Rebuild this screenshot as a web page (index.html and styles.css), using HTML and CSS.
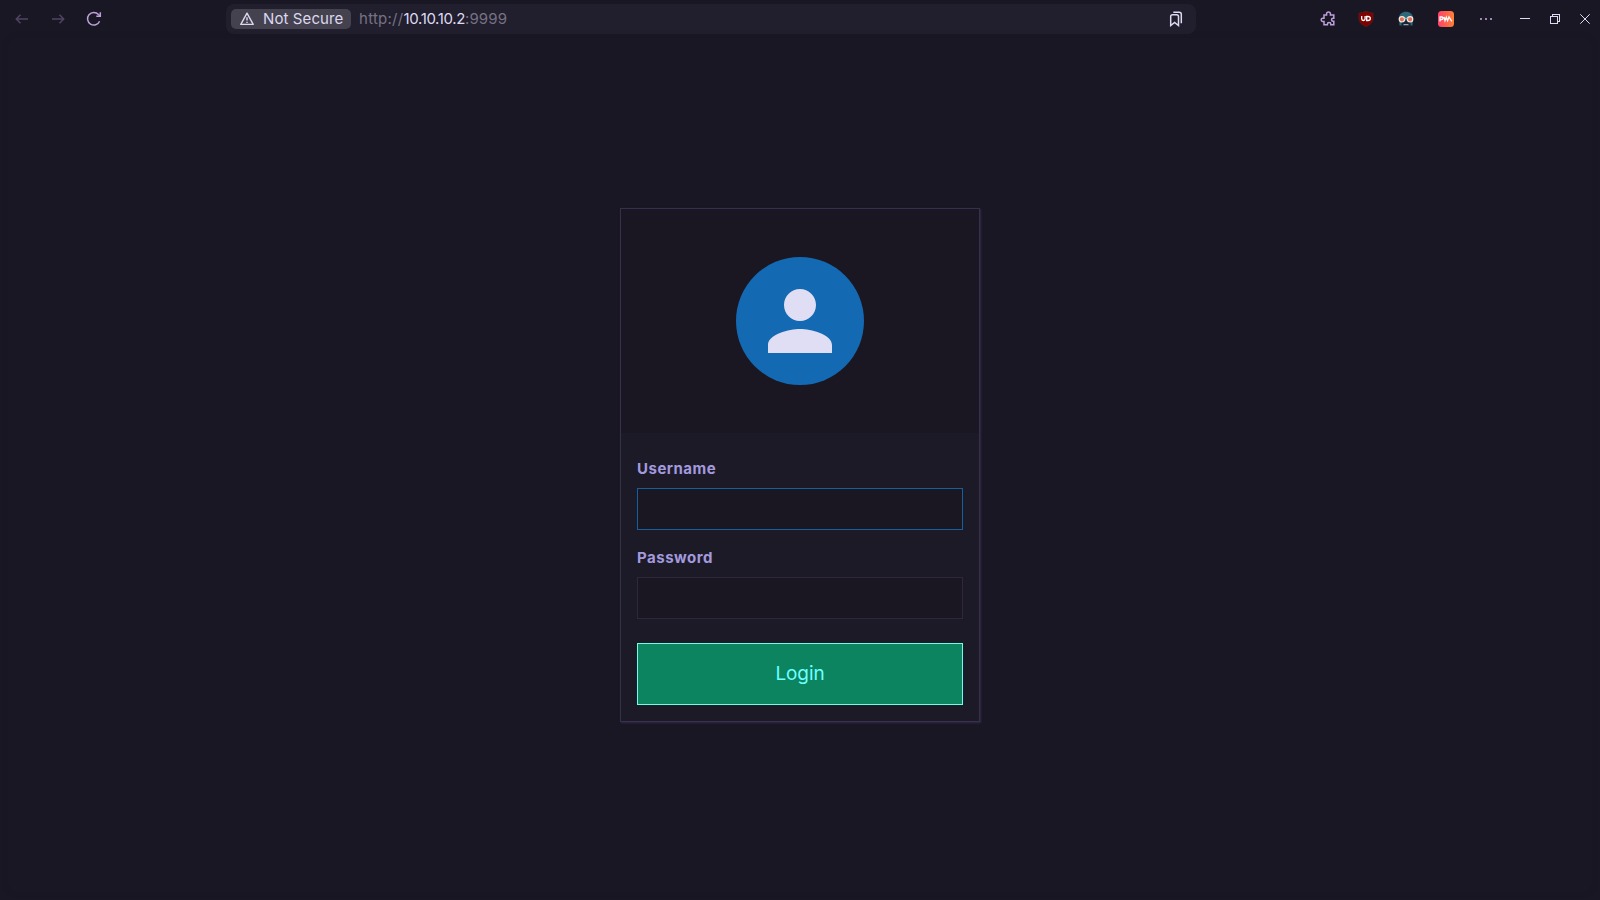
FILE: index.html
```html
<!DOCTYPE html>
<html lang="en">
<head>
<meta charset="utf-8">
<title>Login</title>
<link rel="stylesheet" href="styles.css">
</head>
<body>
<header class="toolbar">
  <nav class="nav">
    <svg class="icon dim" viewBox="0 0 16 16"><path d="M14 8H2.500M6.500 3.800 2.300 8 6.500 12.200"/></svg>
    <svg class="icon dim" viewBox="0 0 16 16"><path d="M2 8h11.500M9.500 3.800 13.700 8 9.500 12.200"/></svg>
    <svg class="icon accent" viewBox="0 0 16 16"><path d="M13.600 10.200A6.300 6.300 0 1 1 12.500 3.500L14 5"/><path d="M14.300 1.300V5.300H10.300"/></svg>
  </nav>
  <div class="urlbar">
    <span class="chip">
      <svg class="warn" viewBox="0 0 16 16"><path d="M8 2.200 14.200 13.400H1.800Z"/><path d="M8 6.200V9.600M8 10.700V12.100"/></svg>
      <span class="chip-text">Not Secure</span>
    </span>
    <span class="url"><span class="scheme">http://</span><span class="host">10.10.10.2</span><span class="port">:9999</span></span>
    <svg class="icon bookmark" viewBox="0 0 16 16"><path d="M2.700 5.500Q2.700 3.700 4.500 3.700H8.700Q10.500 3.700 10.500 5.500V14.500L6.600 11.400 2.700 14.500Z"/><path d="M5.300 1.300H11.200Q13.300 1.300 13.300 3.400V12.200"/></svg>
  </div>
  <div class="extensions">
    <svg class="icon puzzle" viewBox="0 0 16 16"><path d="M4 4H6.600V2.800A1.900 1.900 0 0 1 10.400 2.800V4H13.800V7.300H13A1.500 1.500 0 0 0 13 10.300H13.800V13.800H10.800V13.200A1.700 1.700 0 0 0 7.400 13.200V13.800H4V10.400H2.800A1.600 1.600 0 0 1 2.800 7.200H4Z"/></svg>
    <svg class="ext" viewBox="0 0 16 16"><path class="shield" d="M8 .2Q11 1.600 15.200 2V8.500Q14.500 13 8 15.900Q1.500 13 .8 8.500V2Q5 1.600 8 .2Z"/><path class="mark" d="M3.700 5V7.700Q3.700 9.500 5.400 9.500Q7.100 9.500 7.100 7.700V5M8.700 5.500H10Q12.300 5.500 12.300 7.500Q12.300 9.500 10 9.500H8.700Z"/></svg>
    <svg class="ext" viewBox="0 0 16 16"><path class="head" d="M1 7C1 3 4 .7 8 .7S15 3 15 7L14.500 14.500H1.500Z"/><path class="face" d="M3.500 9.500H12.500V15.300H3.500Z"/><circle class="lens" cx="3.900" cy="8.300" r="2.700"/><circle class="lens" cx="12.100" cy="8.300" r="2.700"/><path class="bridge" d="M6 7.300H10M5.500 13.700H10.500"/></svg>
    <svg class="ext" viewBox="0 0 16 16"><defs><linearGradient id="sunset"><stop offset="0" stop-color="#ff416c"/><stop offset="1" stop-color="#ff8034"/></linearGradient></defs><rect width="16" height="16" rx="3.500" fill="url(#sunset)"/><path class="mark" d="M2 10.500V6H3.700Q5 6 5 7.200T3.700 8.500H2.500M6 6 7 9.700 8.300 6.200 9.600 9.700 11 6 13.800 10.300"/></svg>
    <svg class="icon dots" viewBox="0 0 16 16"><path d="M2 7h2v2H2zM7 7h2v2H7zM12 7h2v2h-2z"/></svg>
  </div>
  <div class="controls">
    <svg class="ctl" viewBox="0 0 10 10"><path d="M0 4.500H10"/></svg>
    <svg class="ctl" viewBox="0 0 10 10"><path d="M.5 2.500H7.500V9.500H.5ZM2.500 2.500V.5H9.500V7.500H7.500"/></svg>
    <svg class="ctl smooth" viewBox="0 0 10 10"><path d="M.3.300 9.700 9.700M9.700.300.300 9.700"/></svg>
  </div>
</header>
<main class="page">
  <form class="card">
    <div class="card-head">
      <div class="avatar"><svg class="person" viewBox="0 0 24 24"><path d="M12 12c2.210 0 4-1.790 4-4s-1.790-4-4-4-4 1.790-4 4 1.790 4 4 4zm0 2c-2.670 0-8 1.340-8 4v2h16v-2c0-2.660-5.330-4-8-4z"/></svg></div>
    </div>
    <div class="card-body">
      <label class="label" for="user">Username</label>
      <input class="field active" id="user" type="text">
      <label class="label second" for="pass">Password</label>
      <input class="field" id="pass" type="password">
      <button class="login" type="button">Login</button>
    </div>
  </form>
</main>
</body>
</html>
```
FILE: styles.css
```css
* { box-sizing: border-box; }
body {
  margin: 0;
  height: 900px;
  overflow: hidden;
  display: flex;
  flex-direction: column;
  background: #1a1724;
  font-family: "Inter", "Open Sans", sans-serif;
  font-size: 16px;
}
svg { display: block; flex: none; }
.toolbar { height: 38px; flex: none; display: flex; align-items: center; }
.nav { width: 226px; padding-left: 14px; display: flex; gap: 20px; }
.icon { width: 16px; height: 16px; fill: none; stroke: currentColor; stroke-width: 1.5; }
.dim { color: #514463; }
.accent, .puzzle { color: #bd9fdb; }
.urlbar {
  width: 970px; height: 30px; padding: 0 12px 0 5px;
  display: flex; align-items: center;
  border-radius: 8px; background: #211e2e;
}
.chip {
  width: 120px; height: 20px; padding-left: 8px;
  display: flex; align-items: center; gap: 8px;
  border-radius: 5px; background: #45424f; color: #dcd8ef;
}
.warn { width: 16px; height: 16px; fill: none; stroke: currentColor; stroke-width: 1.4; stroke-linejoin: round; }
.chip-text { font-size: 15px; letter-spacing: .1px; line-height: 20px; white-space: nowrap; }
.url { flex: 1; padding-left: 8px; font-size: 15px; line-height: 20px; white-space: nowrap; }
.scheme, .port { color: #777282; }
.scheme { letter-spacing: .26px; }
.port { letter-spacing: .1px; }
.host { color: #dedaf2; letter-spacing: -.35px; }
.bookmark { color: #dedaf2; }
.extensions { margin-left: 124px; display: flex; align-items: center; gap: 24px; }
.puzzle { margin-right: -2px; }
.ext { width: 16px; height: 16px; }
.shield { fill: #800000; stroke: #4b2931; stroke-width: .5; }
.mark { fill: none; stroke: #fff; stroke-width: 1.3; }
.head { fill: #2b6878; }
.face { fill: #182536; }
.lens { fill: #e26d55; stroke: #eee8df; stroke-width: 1.2; }
.bridge { fill: none; stroke: #b4c1c7; stroke-width: 1; }
.dots { fill: #9f87b9; stroke: none; }
.controls { margin-left: 26px; display: flex; gap: 20px; }
.ctl { width: 10px; height: 10px; fill: none; stroke: #dedaf2; stroke-width: 1; shape-rendering: crispEdges; }
.smooth { shape-rendering: auto; }
.page {
  height: 854px; margin: 0 8px; padding-top: 170px;
  display: flex; justify-content: center; align-items: flex-start;
  border-radius: 8px; background: #1a1724;
  box-shadow: 0 0 8px rgba(0, 0, 0, .09);
}
.card {
  width: 360px; height: 514px;
  border: 1px solid #37304d;
  background: #1d1a28;
  box-shadow: 1px 1px 2px #312b46;
}
.card-head { height: 224px; display: flex; justify-content: center; padding-top: 48px; background: #1a1723; }
.avatar { width: 128px; height: 128px; border-radius: 50%; padding: 16.400px 16px 15.600px; background: #1469b3; }
.person { width: 96px; height: 96px; fill: #e0def4; }
.card-body { padding: 24px 16px 16px; display: flex; flex-direction: column; }
.label {
  height: 31px; line-height: 24px;
  font-size: 15px; font-weight: 650; letter-spacing: .5px;
  color: #a39ade;
}
.second { margin-top: 16px; }
.field {
  height: 42px; width: 100%; padding: 8px;
  border: 1px solid #2d283c; border-radius: 0; outline: none;
  background: #1a1723; color: #e0def4; font: inherit;
}
.active { border-color: #155f9f; }
.login {
  height: 62px; margin-top: 24px; padding: 0 0 1px;
  border: 1px solid #72fbe8; border-radius: 0;
  background: #0c845f; color: #6effff;
  font-family: inherit; font-size: 19px; letter-spacing: -.1px;
}
```
